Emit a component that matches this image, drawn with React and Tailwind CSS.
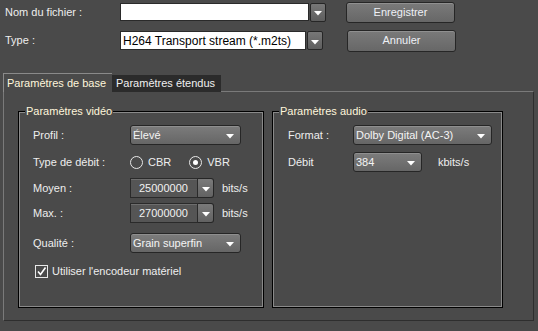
function Tri() {
  return (
    <svg width="8" height="5" viewBox="0 0 8 5" className="mt-[3px]">
      <polygon points="0,0 8,0 4,4.5" fill="#ffffff" />
    </svg>
  )
}

function Drop({ className, text }) {
  return (
    <div className={`flex items-center justify-between rounded-[3px] border border-[#262626] bg-gradient-to-b from-[#7c7c7c] to-[#666666] pl-[2px] pr-[6px] text-[#f4f4f4] shadow-[inset_0_1px_0_#8f8f8f] ${className}`}>
      <span className="leading-none">{text}</span>
      <Tri />
    </div>
  )
}

function Combo({ value }) {
  return (
    <div className="flex h-[20px]">
      <div className="flex w-[68px] items-center border border-[#2a2a2a] bg-[#555555] pl-[8px] text-[#f2f2f2] shadow-[inset_0_1px_0_#6e6e6e]">{value}</div>
      <div className="flex w-[16px] items-center justify-center rounded-r-[3px] border border-l-0 border-[#262626] bg-gradient-to-b from-[#7a7a7a] to-[#626262]">
        <Tri />
      </div>
    </div>
  )
}

function Group({ title, className, children }) {
  return (
    <div className={`relative border border-black shadow-[inset_0_0_0_1px_#8a8a8a] ${className}`}>
      <span className="absolute left-[6px] top-[-8px] bg-[#4a4a4a] px-[1px] leading-[14px] text-[#fff6dc]">{title}</span>
      {children}
    </div>
  )
}

export default function App() {
  return (
    <div className="h-[331px] w-[538px] overflow-hidden bg-[#4a4a4a] pt-[1px] text-[11px] text-[#eeeeee]" style={{ fontFamily: '"Liberation Sans", Arial, sans-serif' }}>
      {/* file row */}
      <div className="flex h-[22px] items-center">
        <span className="w-[120px] pl-[5px]">Nom du fichier :</span>
        <div className="h-[18px] w-[189px] border border-[#2a2a2a] bg-white" />
        <div className="ml-[1px] flex h-[19px] w-[16px] items-center justify-center rounded-[2px] border border-[#262626] bg-gradient-to-b from-[#777777] to-[#5e5e5e]">
          <Tri />
        </div>
        <button className="ml-[20px] h-[21px] w-[109px] rounded-[3px] border border-[#262626] bg-gradient-to-b from-[#7a7a7a] to-[#676767] text-[#eef0f6] shadow-[inset_0_1px_0_#909090]">Enregistrer</button>
      </div>
      <div className="mt-[6px] flex h-[23px] items-center">
        <span className="w-[120px] pl-[5px]">Type :</span>
        <div className="flex h-[19px] w-[186px] items-center border border-[#2a2a2a] bg-white pl-[2px] text-[12px] text-black">H264 Transport stream (*.m2ts)</div>
        <div className="ml-[1px] flex h-[19px] w-[16px] items-center justify-center rounded-[2px] border border-[#262626] bg-gradient-to-b from-[#777777] to-[#5e5e5e]">
          <Tri />
        </div>
        <button className="ml-[24px] h-[22px] w-[109px] rounded-[3px] border border-[#262626] bg-gradient-to-b from-[#7a7a7a] to-[#676767] text-[#eef0f6] shadow-[inset_0_1px_0_#909090]">Annuler</button>
      </div>

      {/* tabs */}
      <div className="relative z-10 mt-[21px] ml-[3px] flex h-[19px] items-end">
        <div className="flex h-[19px] w-[109px] items-center border-l border-t border-[#8a8a8a] bg-[#4a4a4a] pl-[3px] text-[#fff6dc]">Paramètres de base</div>
        <div className="flex h-[17px] w-[109px] items-center bg-[#2b2b2b] pl-[4px] text-[#f0f0f0]">Paramètres étendus</div>
      </div>
      <div className="-mt-[1px] ml-[3px] flex h-[230px] w-[531px] gap-[8px] border border-l-[#7a7a7a] border-t-[#7a7a7a] border-r-[#2e2e2e] border-b-[#2e2e2e] pl-[14px] pt-[19px]">
        <Group title="Paramètres vidéo" className="h-[197px] w-[246px] pl-[14px] pt-[13px]">
          <div className="flex h-[20px] items-center">
            <span className="w-[97px]">Profil :</span>
            <Drop className="h-[20px] w-[111px]" text="Élevé" />
          </div>
          <div className="mt-[8px] flex h-[18px] items-center">
            <span className="w-[97px]">Type de débit :</span>
            <span className="h-[13px] w-[13px] rounded-full border border-[#e8e8e8]" />
            <span className="ml-[5px]">CBR</span>
            <span className="ml-[18px] flex h-[13px] w-[13px] items-center justify-center rounded-full border border-[#e8e8e8]">
              <span className="h-[5px] w-[5px] rounded-full bg-white" />
            </span>
            <span className="ml-[5px]">VBR</span>
          </div>
          <div className="mt-[7px] flex items-center">
            <span className="w-[97px]">Moyen :</span>
            <Combo value="25000000" />
            <span className="ml-[8px]">bits/s</span>
          </div>
          <div className="mt-[5px] flex items-center">
            <span className="w-[97px]">Max. :</span>
            <Combo value="27000000" />
            <span className="ml-[8px]">bits/s</span>
          </div>
          <div className="mt-[10px] flex h-[20px] items-center">
            <span className="w-[97px]">Qualité :</span>
            <Drop className="h-[20px] w-[111px]" text="Grain superfin" />
          </div>
          <div className="mt-[10px] flex h-[16px] items-center pl-[2px]">
            <span className="flex h-[13px] w-[13px] items-center justify-center border border-[#e8e8e8]">
              <svg width="11" height="11" viewBox="0 0 11 11">
                <path d="M2 5.5 L4.5 8.5 L9.5 1.5" stroke="#ffffff" strokeWidth="1.6" fill="none" />
              </svg>
            </span>
            <span className="ml-[4px]">Utiliser l'encodeur matériel</span>
          </div>
        </Group>
        <Group title="Paramètres audio" className="h-[197px] w-[231px] pl-[15px] pt-[13px]">
          <div className="flex h-[20px] items-center">
            <span className="w-[65px]">Format :</span>
            <Drop className="h-[20px] w-[139px]" text="Dolby Digital (AC-3)" />
          </div>
          <div className="mt-[7px] flex h-[20px] items-center">
            <span className="w-[65px]">Débit</span>
            <Drop className="h-[20px] w-[69px]" text="384" />
            <span className="ml-[16px]">kbits/s</span>
          </div>
        </Group>
      </div>
    </div>
  )
}
